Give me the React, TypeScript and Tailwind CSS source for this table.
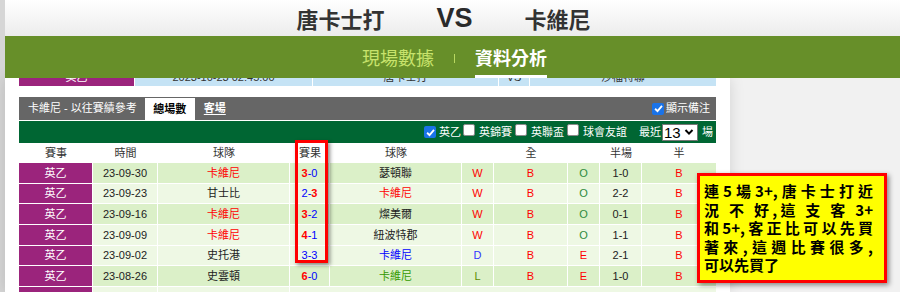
import React from 'react';

const cw = ['w-[74px]', 'w-[65px]', 'w-[132px]', 'w-[40px]', 'w-[132px]', 'w-[32px]', 'w-[74px]', 'w-[32px]', 'w-[42px]', 'w-[74px]'];

type Seg = { t: string; c: string };
type Row = {
  bg: string;
  date: string;
  t1: Seg;
  score: Seg[];
  t2: Seg;
  w: Seg;
  o: Seg;
  h: string;
};

const RED = 'text-[#ff0000]';
const BLUE = 'text-[#0000ff]';
const BLK = 'text-[#222222]';
const GRN = 'text-[#339900]';
const OGR = 'text-[#2e8b3e]';
const OLV = 'text-[#5e8c00]';
const DARK = 'bg-[#dbf0c8]';
const LIGHT = 'bg-[#eef8e4]';

const rows: Row[] = [
  { bg: DARK, date: '23-09-30', t1: { t: '卡維尼', c: RED }, score: [{ t: '3', c: 'text-[#ff0000] font-bold' }, { t: '-0', c: BLUE }], t2: { t: '瑟頓聯', c: BLK }, w: { t: 'W', c: RED }, o: { t: 'O', c: OGR }, h: '1-0' },
  { bg: LIGHT, date: '23-09-23', t1: { t: '甘士比', c: BLK }, score: [{ t: '2-', c: BLUE }, { t: '3', c: 'text-[#ff0000] font-bold' }], t2: { t: '卡維尼', c: RED }, w: { t: 'W', c: RED }, o: { t: 'O', c: OGR }, h: '2-2' },
  { bg: DARK, date: '23-09-16', t1: { t: '卡維尼', c: RED }, score: [{ t: '3', c: 'text-[#ff0000] font-bold' }, { t: '-2', c: BLUE }], t2: { t: '燦美爾', c: BLK }, w: { t: 'W', c: RED }, o: { t: 'O', c: OGR }, h: '0-1' },
  { bg: LIGHT, date: '23-09-09', t1: { t: '卡維尼', c: RED }, score: [{ t: '4', c: 'text-[#ff0000] font-bold' }, { t: '-1', c: BLUE }], t2: { t: '紐波特郡', c: BLK }, w: { t: 'W', c: RED }, o: { t: 'O', c: OGR }, h: '1-1' },
  { bg: LIGHT, date: '23-09-02', t1: { t: '史托港', c: BLK }, score: [{ t: '3-3', c: BLUE }], t2: { t: '卡維尼', c: BLUE }, w: { t: 'D', c: 'text-[#3333ff]' }, o: { t: 'E', c: RED }, h: '2-1' },
  { bg: DARK, date: '23-08-26', t1: { t: '史雲頓', c: BLK }, score: [{ t: '6', c: 'text-[#ff0000] font-bold' }, { t: '-0', c: BLUE }], t2: { t: '卡維尼', c: GRN }, w: { t: 'L', c: OLV }, o: { t: 'E', c: RED }, h: '1-0' },
];

function Cb({ checked }: { checked?: boolean }) {
  if (checked) {
    return (
      <span className="inline-flex w-[12px] h-[12px] rounded-[2px] bg-[#1a73e8] items-center justify-center shrink-0">
        <svg viewBox="0 0 12 12" className="w-[11px] h-[11px]">
          <path d="M2.3 6.3 L4.9 8.8 L9.8 3.2" stroke="white" strokeWidth="2" fill="none" />
        </svg>
      </span>
    );
  }
  return <span className="inline-block w-[12px] h-[12px] rounded-[2px] bg-white border border-[#8a8a8a] shrink-0" />;
}

export default function App() {
  return (
    <div className="relative flex w-[900px] h-[292px] overflow-hidden bg-[#f1f1f1] font-['Liberation_Sans','Noto_Sans_CJK_TC',sans-serif]">
      <div className="w-[5px] shrink-0 bg-[#d6d6d6]" />
      <div className="flex-1 flex flex-col min-w-0">
        {/* title */}
        <div className="h-[36px] shrink-0 bg-gradient-to-b from-white to-[#ececec] grid grid-cols-[1fr_auto_1fr] items-center gap-x-[52px] text-[#333] pl-[4px]">
          <div className="text-right text-[22px] font-bold leading-none font-['Noto_Sans_CJK_TC',sans-serif]">唐卡士打</div>
          <div className="text-[27px] font-bold leading-none font-['Liberation_Sans',sans-serif] text-[#2a2a2a]">VS</div>
          <div className="text-left text-[22px] font-bold leading-none font-['Noto_Sans_CJK_TC',sans-serif]">卡維尼</div>
        </div>
        {/* nav */}
        <div className="relative z-10 h-[42px] shrink-0 bg-[#678f29] flex items-center justify-center gap-[20px] pl-[4px] font-['Noto_Sans_CJK_TC',sans-serif]">
          <span className="text-[18px] leading-none text-[#c8e36c]">現場數據</span>
          <span className="w-[1px] h-[9px] bg-[#b8d860] mt-[2px]" />
          <span className="relative text-[18px] leading-none font-bold text-white">
            資料分析
            <span className="absolute left-0 right-0 bottom-[-12px] h-[3px] bg-white" />
          </span>
        </div>
        {/* body */}
        <div className="flex flex-1 min-h-0">
          <div className="w-[725px] shrink-0 bg-white shadow-[0_0_14px_rgba(0,0,0,0.13)] px-[14px] flex flex-col text-[11px]">
            <div className="h-[8px] overflow-hidden shrink-0">
              <div className="flex h-[20px] -mt-[11px] items-center text-[#333]">
                <div className="w-[116px] h-full bg-[#9b247c] border-r border-white text-white flex items-center justify-center">英乙</div>
                <div className="w-[178px] h-full bg-[#c5e3f5] border-r border-white flex items-center justify-center">2023-10-23 02:45:00</div>
                <div className="w-[186px] h-full bg-[#c5e3f5] border-r border-white flex items-center justify-center">唐卡士打</div>
                <div className="w-[31px] h-full bg-[#c5e3f5] border-r border-white flex items-center justify-center">VS</div>
                <div className="w-[186px] h-full bg-[#c5e3f5] flex items-center justify-center">沙福特聯</div>
              </div>
            </div>
            <div className="h-[11px] shrink-0" />
            {/* gray bar */}
            <div className="h-[23px] shrink-0 bg-[#666666] flex items-stretch pl-[9px] pr-[6px] text-white">
              <span className="flex items-center">卡維尼 - 以往賽績參考</span>
              <span className="ml-[8px] mt-[1px] w-[50px] bg-white text-black font-bold flex items-center justify-center">總場數</span>
              <span className="ml-[9px] flex items-center font-bold underline underline-offset-2">客場</span>
              <span className="ml-auto flex items-center gap-[2px]">
                <Cb checked />
                <span>顯示備注</span>
              </span>
            </div>
            <div className="h-[1px] shrink-0" />
            {/* green bar */}
            <div className="h-[22px] shrink-0 bg-[#006633] flex items-center justify-end pr-[3px] text-white">
              <Cb checked />
              <span className="ml-[3px]">英乙</span>
              <span className="ml-[2px]"><Cb /></span>
              <span className="ml-[4px]">英錦賽</span>
              <span className="ml-[3px]"><Cb /></span>
              <span className="ml-[4px]">英聯盃</span>
              <span className="ml-[3px]"><Cb /></span>
              <span className="ml-[4px]">球會友誼</span>
              <span className="ml-[12px]">最近</span>
              <span className="ml-[1px] w-[36px] h-[17px] bg-white border border-[#767676] flex items-center justify-between pl-[1px] pr-[3px] text-black">
                <span className="text-[15px] leading-none font-['Liberation_Sans_Narrow','Liberation_Sans',sans-serif]">13</span>
                <svg viewBox="0 0 10 10" className="w-[10px] h-[10px]">
                  <path d="M1.5 3 L5 6.6 L8.5 3" stroke="black" strokeWidth="2" fill="none" />
                </svg>
              </span>
              <span className="ml-[4px]">場</span>
            </div>
            {/* header row */}
            <div className="h-[20px] shrink-0 flex items-center text-[#333]">
              {['賽事', '時間', '球隊', '賽果', '球隊', '', '全', '', '半場', '半'].map((t, i) => (
                <div key={i} className={`${cw[i]} shrink-0 text-center`}>{t}</div>
              ))}
            </div>
            {/* data rows */}
            {rows.map((r, i) => (
              <div key={i} className={`h-[20.67px] shrink-0 flex border-b border-white ${r.bg}`}>
                <div className={`${cw[0]} shrink-0 bg-[#9b247c] border-r border-white text-white flex items-center justify-center`}>英乙</div>
                <div className={`${cw[1]} shrink-0 border-r border-white text-[#222] flex items-center justify-center`}>{r.date}</div>
                <div className={`${cw[2]} shrink-0 border-r border-white flex items-center justify-center ${r.t1.c}`}>{r.t1.t}</div>
                <div className={`${cw[3]} shrink-0 border-r border-white flex items-center justify-center`}>
                  {r.score.map((s, j) => (
                    <span key={j} className={s.c}>{s.t}</span>
                  ))}
                </div>
                <div className={`${cw[4]} shrink-0 border-r border-white flex items-center justify-center ${r.t2.c}`}>{r.t2.t}</div>
                <div className={`${cw[5]} shrink-0 border-r border-white flex items-center justify-center ${r.w.c}`}>{r.w.t}</div>
                <div className={`${cw[6]} shrink-0 border-r border-white flex items-center justify-center text-[#ff0000]`}>B</div>
                <div className={`${cw[7]} shrink-0 border-r border-white flex items-center justify-center ${r.o.c}`}>{r.o.t}</div>
                <div className={`${cw[8]} shrink-0 border-r border-white flex items-center justify-center text-[#222]`}>{r.h}</div>
                <div className={`${cw[9]} shrink-0 flex items-center justify-center text-[#ff0000]`}>B</div>
              </div>
            ))}
            <div className={`h-[20.67px] shrink-0 flex ${LIGHT}`}>
              <div className={`${cw[0]} shrink-0 bg-[#9b247c] border-r border-white`} />
              <div className={`${cw[1]} shrink-0 border-r border-white`} />
              <div className={`${cw[2]} shrink-0 border-r border-white`} />
            </div>
          </div>
          <div className="flex-1" />
        </div>
      </div>

      {/* red box around scores */}
      <div className="absolute left-[295px] top-[140px] w-[33px] h-[123px] border-[3px] border-[#ff0000] shadow-[2px_2px_4px_rgba(0,0,0,0.45)]" />

      {/* yellow note */}
      <div className="absolute left-[697px] top-[173px] w-[190px] h-[110px] border-[3px] border-[#ff0000] bg-[#ffff00] shadow-[2px_2px_5px_rgba(0,0,0,0.45)] pl-[4px] pr-[11px] pt-[6px] text-black font-bold text-[15px] leading-[18.5px] font-['Noto_Sans_CJK_TC',sans-serif]">
        <div className="text-justify [text-align-last:justify]">連5場3+,唐卡士打近</div>
        <div className="text-justify [text-align-last:justify]">況 不 好,這 支 客 3+</div>
        <div className="text-justify [text-align-last:justify]">和5+,客正比可以先買</div>
        <div className="text-justify [text-align-last:justify]">著來,這週比賽很多,</div>
        <div>可以先買了</div>
      </div>
    </div>
  );
}
